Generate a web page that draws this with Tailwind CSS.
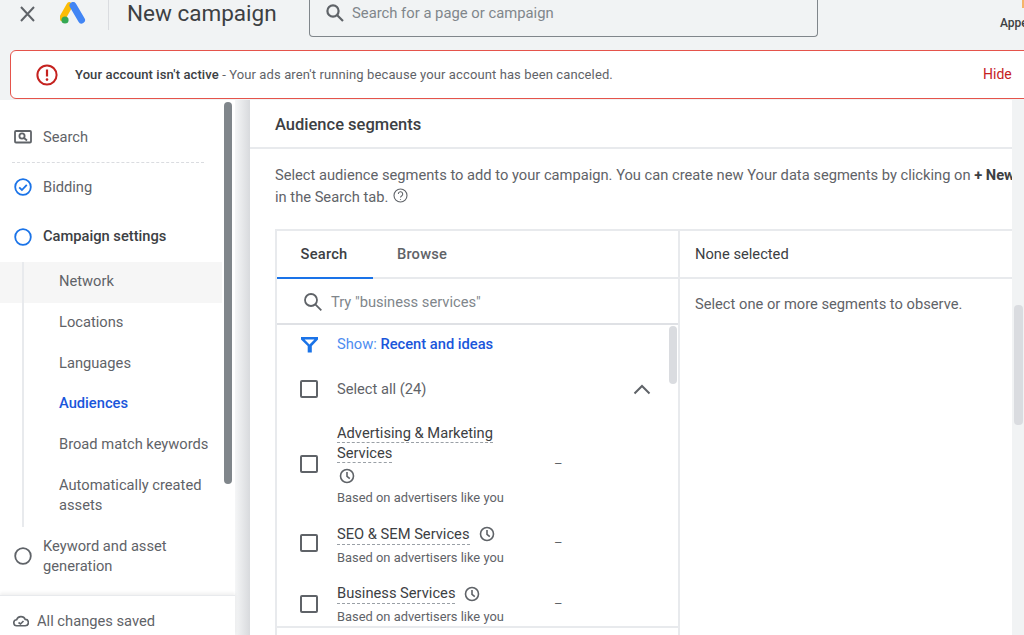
<!DOCTYPE html>
<html lang="en">
<head>
    <meta charset="UTF-8">
    <title>New campaign</title>
    <script src="https://cdn.jsdelivr.net/npm/@tailwindcss/browser@4"></script>
</head>
<body class="w-[1024px] h-[635px] overflow-hidden bg-[#f1f3f4] text-[#5f6368] font-['Roboto',sans-serif] text-[14.7px]">
    <!-- top bar -->
    <header class="h-[50px] flex items-start relative">
        <svg class="ml-[18px] mt-[5px] w-[18px] h-[18px]" viewBox="0 0 18 18" fill="none" stroke="#5f6368" stroke-width="2"><path d="M3 2l13 14M16 2L3 16"/></svg>
        <svg class="ml-[24px] mt-[2px] w-[26px] h-[22px]" viewBox="0 0 26 22">
            <path d="M9.5 3.5L2.5 16" stroke="#fbbc04" stroke-width="6.5" stroke-linecap="round"/>
            <path d="M13 3.5L21.5 18" stroke="#4285f4" stroke-width="7" stroke-linecap="round"/>
            <circle cx="5" cy="18" r="3.6" fill="#34a853"/>
        </svg>
        <div class="ml-[22px] w-px h-[30px] bg-[#dadce0]"></div>
        <h1 class="ml-[18px] w-[182px] text-[22.5px] leading-[26px] text-[#3c4043]">New campaign</h1>
        <div class="w-[509px] h-[37px] border-x border-b border-[#80868b] rounded-b-[4px] flex items-start pl-[15px] pt-[3px]">
            <svg class="w-[20px] h-[20px] shrink-0" viewBox="0 0 20 20" fill="none" stroke="#5f6368" stroke-width="2.2"><circle cx="8" cy="8" r="5.6"/><path d="M12 12l6 6"/></svg>
            <span class="ml-[7px] -mt-[1px] leading-[22px] text-[14.8px] text-[#80868b]">Search for a page or campaign</span>
        </div>
        <span class="absolute left-[1000px] top-[14px] text-[12px] font-medium text-[#3c4043]">Appearance</span>
        <div class="absolute left-[1022px] top-0 w-[2px] h-[8px] bg-[#f4b56a]"></div>
    </header>

    <!-- alert -->
    <div class="ml-[10px] w-[1030px] h-[49px] bg-white border border-[#e5534b] rounded-[6px] flex items-center">
        <svg class="ml-[25px] w-[22px] h-[22px] shrink-0" viewBox="0 0 22 22" fill="none"><circle cx="11" cy="11" r="9.6" stroke="#c5221f" stroke-width="2"/><path d="M11 5.5v7" stroke="#c5221f" stroke-width="2.2"/><circle cx="11" cy="15.6" r="1.3" fill="#c5221f"/></svg>
        <p class="ml-[17px] w-[908px] text-[13px] tracking-[0.11px]"><span class="font-medium text-[#3c4043]">Your account isn't active</span> - Your ads aren't running because your account has been canceled.</p>
        <span class="text-[14px] text-[#c5221f]">Hide</span>
    </div>

    <div class="mt-px flex h-[536px] relative">
        <!-- sidebar -->
        <aside class="w-[235px] shrink-0 bg-white relative flex flex-col">
            <div class="h-[495px] relative">
                <div class="h-[63px] mx-[12px] w-[192px] border-b border-dashed border-[#dadce0] flex items-center pt-[12px]">
                    <svg class="ml-[2px] w-[18px] h-[14px]" viewBox="0 0 18 14" fill="none" stroke="#5f6368" stroke-width="1.8"><rect x="1" y="1" width="16" height="11.5" rx="1"/><circle cx="8" cy="6" r="2.6"/><path d="M10 8l3 2.5"/></svg>
                    <span class="ml-[11px]">Search</span>
                </div>
                <div class="h-[48px] flex items-center pl-[14px]">
                    <svg class="w-[18px] h-[18px]" viewBox="0 0 18 18" fill="none" stroke="#1a73e8" stroke-width="1.8"><circle cx="9" cy="9" r="7.8"/><path d="M5.2 9.4l2.7 2.6 4.9-5.2"/></svg>
                    <span class="ml-[11px]">Bidding</span>
                </div>
                <div class="h-[51px] flex items-center pl-[14px]">
                    <svg class="w-[18px] h-[18px]" viewBox="0 0 18 18" fill="none" stroke="#1a73e8" stroke-width="1.8"><circle cx="9" cy="9" r="7.8"/></svg>
                    <span class="ml-[11px] font-medium text-[#3c4043]">Campaign settings</span>
                </div>
                <div class="w-[222px]">
                    <div class="h-[41px] flex items-center pl-[59px] pb-[2px] bg-[#f6f6f6]">Network</div>
                    <div class="h-[40px] flex items-center pl-[59px] pb-[1px]">Locations</div>
                    <div class="h-[40px] flex items-center pl-[59px]">Languages</div>
                    <div class="h-[41px] flex items-center pl-[59px] font-medium text-[#1a56db]">Audiences</div>
                    <div class="h-[40px] flex items-center pl-[59px]">Broad match keywords</div>
                    <div class="h-[62px] flex items-center pl-[59px] leading-[20px]">Automatically created<br>assets</div>
                </div>
                <div class="flex items-center pl-[14px] h-[60px] leading-[20px]">
                    <svg class="w-[18px] h-[18px] shrink-0" viewBox="0 0 18 18" fill="none" stroke="#5f6368" stroke-width="1.8"><circle cx="9" cy="9" r="7.8"/></svg>
                    <span class="ml-[11px]">Keyword and asset<br>generation</span>
                </div>
                <div class="absolute left-[22px] top-[162px] w-[2px] h-[265px] bg-[#e8eaed]"></div>
                <div class="absolute left-[224px] top-[2px] w-[8px] h-[382px] rounded-[4px] bg-[#80868b]"></div>
            </div>
            <div class="flex-1 border-t border-[#e8eaed] shadow-[0_-2px_3px_rgba(60,64,67,0.08)] flex items-center pl-[13px] pt-[10px]">
                <svg class="w-[16px] h-[12px]" viewBox="0 0 16 12" fill="none" stroke="#5f6368" stroke-width="1.6"><path d="M4 10.8a3 3 0 0 1-.4-6A4.6 4.6 0 0 1 12.2 4.400a3.200 3.200 0 0 1 0 6.400z"/><path d="M5.500 7.500l2 1.500 3-3"/></svg>
                <span class="ml-[8px]">All changes saved</span>
            </div>
        </aside>

        <!-- gutter -->
        <div class="w-[15px] shrink-0 bg-gradient-to-r from-[#f5f6f7] to-[#d8dadd]"></div>

        <!-- main card -->
        <main class="w-[762px] shrink-0 h-[535px] bg-white overflow-hidden">
            <div class="h-[49px] border-b-2 border-[#e8eaed] flex items-center pl-[25px] pt-[4px] text-[16.5px] font-medium text-[#3c4043]">Audience segments</div>
            <p class="pl-[25px] pt-[15px] leading-[22px] whitespace-nowrap h-[80px]">Select audience segments to add to your campaign. You can create new Your data segments by clicking on <b class="font-bold text-[#3c4043]">+ New segment</b><br>in the Search tab.
                <svg class="inline ml-[1px] mb-[5px] w-[15px] h-[15px]" viewBox="0 0 15 15" fill="none" stroke="#5f6368" stroke-width="1.1"><circle cx="7.500" cy="7.500" r="6.500"/><path d="M5.300 6a2.200 2.200 0 1 1 3.300 1.900c-.7.4-1.100.8-1.100 1.600M7.500 11v.8"/></svg>
            </p>

            <div class="ml-[25px] w-[800px] h-[407px] border-t-2 border-l-2 border-[#e8eaed] flex">
                <!-- left pane -->
                <section class="w-[403px] shrink-0 border-r-2 border-[#e8eaed] relative">
                    <div class="h-[48px] border-b-2 border-[#e8eaed] flex relative font-medium tracking-[0.2px]">
                        <div class="w-[94px] flex items-center justify-center text-[#3c4043]">Search</div>
                        <div class="ml-[3px] w-[96px] flex items-center justify-center">Browse</div>
                        <div class="absolute left-0 bottom-[-2px] w-[96px] h-[2px] bg-[#1a73e8]"></div>
                    </div>
                    <div class="h-[46px] border-b-2 border-[#dfe1e5] flex items-center pl-[26px] pt-[2px]">
                        <svg class="w-[20px] h-[20px]" viewBox="0 0 20 20" fill="none" stroke="#5f6368" stroke-width="1.8"><circle cx="8" cy="8" r="6"/><path d="M12.300 12.300l6 6"/></svg>
                        <span class="ml-[8px] text-[#80868b]">Try "business services"</span>
                    </div>
                    <div class="h-[40px] flex items-center pl-[24px] pb-[2px]">
                        <svg class="w-[17px] h-[17px]" viewBox="0 0 17 17" fill="#1a73e8"><path d="M0 1h17v2.600L10.800 10v6.500H6.700V10L0 3.600zM3.600 3.400l4.900 5 4.900-5z" fill-rule="evenodd"/></svg>
                        <span class="ml-[19px] text-[#4d8cf0]">Show: <span class="font-medium text-[#1a56db]">Recent and ideas</span></span>
                    </div>
                    <div class="h-[48px] flex items-center pl-[23px]">
                        <span class="w-[18px] h-[18px] border-2 border-[#5f6368] rounded-[2px]"></span>
                        <span class="ml-[19px]">Select all (24)</span>
                        <svg class="absolute left-[356px] top-[153px] w-[18px] h-[11px]" viewBox="0 0 18 11" fill="none" stroke="#5f6368" stroke-width="2"><path d="M1.500 9.500L9 2l7.500 7.500"/></svg>
                    </div>
                    <div class="h-[102px] flex items-center pl-[23px]">
                        <span class="w-[18px] h-[18px] border-2 border-[#5f6368] rounded-[2px] shrink-0"></span>
                        <div class="ml-[19px] w-[217px]">
                            <div class="leading-[20px] text-[#3c4043]"><span class="border-b border-dashed border-[#9aa0a6]">Advertising &amp; Marketing</span><br><span class="border-b border-dashed border-[#9aa0a6]">Services</span></div>
                            <svg class="mt-[5px] ml-[2px] w-[16px] h-[16px]" viewBox="0 0 16 16" fill="none" stroke="#5f6368" stroke-width="1.600"><circle cx="8" cy="8" r="6.500"/><path d="M8 4v4.300l2.800 2.300"/></svg>
                            <div class="mt-[6px] text-[12.9px] leading-[16px]">Based on advertisers like you</div>
                        </div>
                        <span class="text-[13px]">–</span>
                    </div>
                    <div class="h-[59px] flex items-center pl-[23px]">
                        <span class="w-[18px] h-[18px] border-2 border-[#5f6368] rounded-[2px] shrink-0 mb-[4px]"></span>
                        <div class="ml-[19px] w-[217px]">
                            <div class="flex items-center leading-[20px] text-[#3c4043]"><span class="border-b border-dashed border-[#9aa0a6]">SEO &amp; SEM Services</span><svg class="ml-[9px] w-[16px] h-[16px]" viewBox="0 0 16 16" fill="none" stroke="#5f6368" stroke-width="1.600"><circle cx="8" cy="8" r="6.500"/><path d="M8 4v4.300l2.800 2.300"/></svg></div>
                            <div class="mt-[5px] text-[12.9px] leading-[16px]">Based on advertisers like you</div>
                        </div>
                        <span class="text-[13px] mb-[4px]">–</span>
                    </div>
                    <div class="h-[54px] border-b-2 border-[#e8eaed] flex items-start pl-[23px] pt-[9px]">
                        <span class="w-[18px] h-[18px] border-2 border-[#5f6368] rounded-[2px] shrink-0 mt-[12px]"></span>
                        <div class="ml-[19px] w-[217px]">
                            <div class="flex items-center leading-[20px] text-[#3c4043]"><span class="border-b border-dashed border-[#9aa0a6]">Business Services</span><svg class="ml-[9px] w-[16px] h-[16px]" viewBox="0 0 16 16" fill="none" stroke="#5f6368" stroke-width="1.600"><circle cx="8" cy="8" r="6.500"/><path d="M8 4v4.300l2.800 2.300"/></svg></div>
                            <div class="mt-[5px] text-[12.9px] leading-[16px]">Based on advertisers like you</div>
                        </div>
                        <span class="text-[13px] mt-[11px]">–</span>
                    </div>
                    <div class="absolute left-[392px] top-[95px] w-[8px] h-[58px] rounded-[4px] bg-[#dadce0]"></div>
                </section>
                <!-- right pane -->
                <section class="flex-1">
                    <div class="h-[48px] border-b-2 border-[#e8eaed] flex items-center pl-[15px] text-[#3c4043]">None selected</div>
                    <div class="pl-[15px] pt-[14px]">Select one or more segments to observe.</div>
                </section>
            </div>
        </main>

        <!-- page scrollbar -->
        <div class="flex-1 relative">
            <div class="absolute left-[2px] top-[205px] w-[9px] h-[120px] rounded-[4px] bg-[#dadce0]"></div>
        </div>
    </div>
</body>
</html>
